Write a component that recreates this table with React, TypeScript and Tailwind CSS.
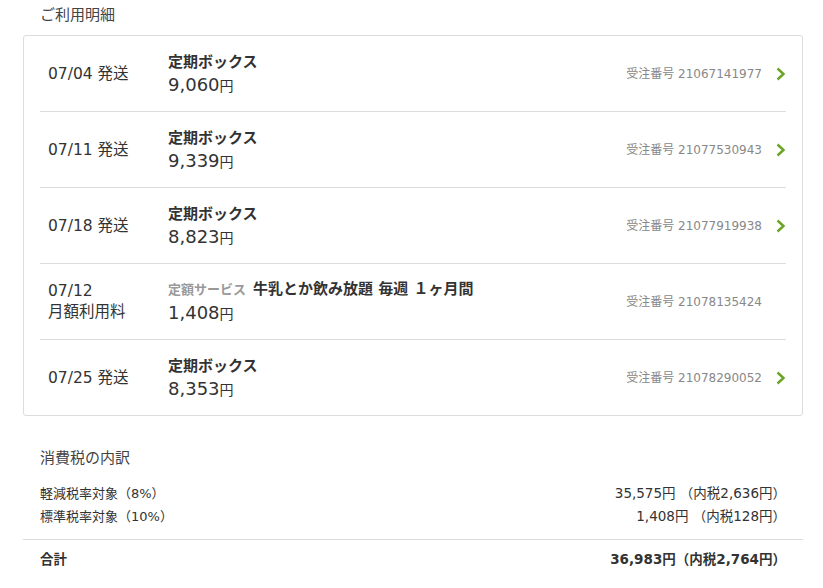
const font = { fontFamily: '"DejaVu Sans", Verdana, "Noto Sans CJK JP", sans-serif' };

type Row = {
  date: string;
  sub?: string;
  kind?: string;
  title: string;
  price: string;
  order: string;
  link: boolean;
};

const rows: Row[] = [
  { date: '07/04 発送', title: '定期ボックス', price: '9,060', order: '21067141977', link: true },
  { date: '07/11 発送', title: '定期ボックス', price: '9,339', order: '21077530943', link: true },
  { date: '07/18 発送', title: '定期ボックス', price: '8,823', order: '21077919938', link: true },
  {
    date: '07/12',
    sub: '月額利用料',
    kind: '定額サービス',
    title: '牛乳とか飲み放題 毎週 １ヶ月間',
    price: '1,408',
    order: '21078135424',
    link: false,
  },
  { date: '07/25 発送', title: '定期ボックス', price: '8,353', order: '21078290052', link: true },
];

function Chevron() {
  return (
    <svg width="11" height="14" viewBox="0 0 11 14" fill="none">
      <path d="M2.5 1.5 L8.5 7 L2.5 12.5" stroke="#6aa322" strokeWidth="2.4" strokeLinejoin="miter" />
    </svg>
  );
}

export default function App() {
  return (
    <div className="min-h-[588px] w-[823px] bg-white text-[#333]" style={font}>
      <h2 className="h-[35px] pl-[40px] pt-[5px] text-[15px] leading-[20px] text-[#444]">ご利用明細</h2>

      <div className="ml-[23px] mr-[20px] rounded-[3px] border border-[#dcdcdc] px-[16px]">
        {rows.map((r, i) => {
          const last = i === rows.length - 1;
          return (
            <div
              key={r.order}
              className={`flex items-center ${last ? 'h-[75px] pt-[1px]' : 'h-[76px] border-b border-[#dcdcdc] pt-[1px]'}`}
            >
              <div className="w-[128px] pl-[8px] text-[15.5px] leading-[21px]">
                <div>{r.date}</div>
                {r.sub && <div>{r.sub}</div>}
              </div>
              <div className="flex-1">
                <div className="text-[15px] font-bold leading-[22px]">
                  {r.kind && <span className="mr-[7px] text-[13px] text-[#999]">{r.kind}</span>}
                  {r.title}
                </div>
                <div className="text-[18px] leading-[24px]">
                  {r.price}
                  <span className="text-[14px]">円</span>
                </div>
              </div>
              <div className="text-[12px] text-[#888]">受注番号 {r.order}</div>
              <div className="flex w-[24px] justify-end">{r.link && <Chevron />}</div>
            </div>
          );
        })}
      </div>

      <div className="pl-[40px] pr-[37px] pt-[32px]">
        <h3 className="text-[15px] leading-[20px] text-[#444]">消費税の内訳</h3>
        <div className="mt-[14px] text-[13px] leading-[23px]">
          <div className="flex justify-between">
            <span>軽減税率対象（8%）</span>
            <span className="text-[13.5px]">35,575円 （内税2,636円）</span>
          </div>
          <div className="flex justify-between">
            <span>標準税率対象（10%）</span>
            <span className="text-[13.5px]">1,408円 （内税128円）</span>
          </div>
        </div>
      </div>

      <div className="ml-[23px] mr-[20px] mt-[11px] flex justify-between border-t border-[#dcdcdc] pl-[17px] pr-[17px] pt-[8px] text-[13.5px] font-bold leading-[22px]">
        <span>合計</span>
        <span>36,983円（内税2,764円）</span>
      </div>
    </div>
  );
}
